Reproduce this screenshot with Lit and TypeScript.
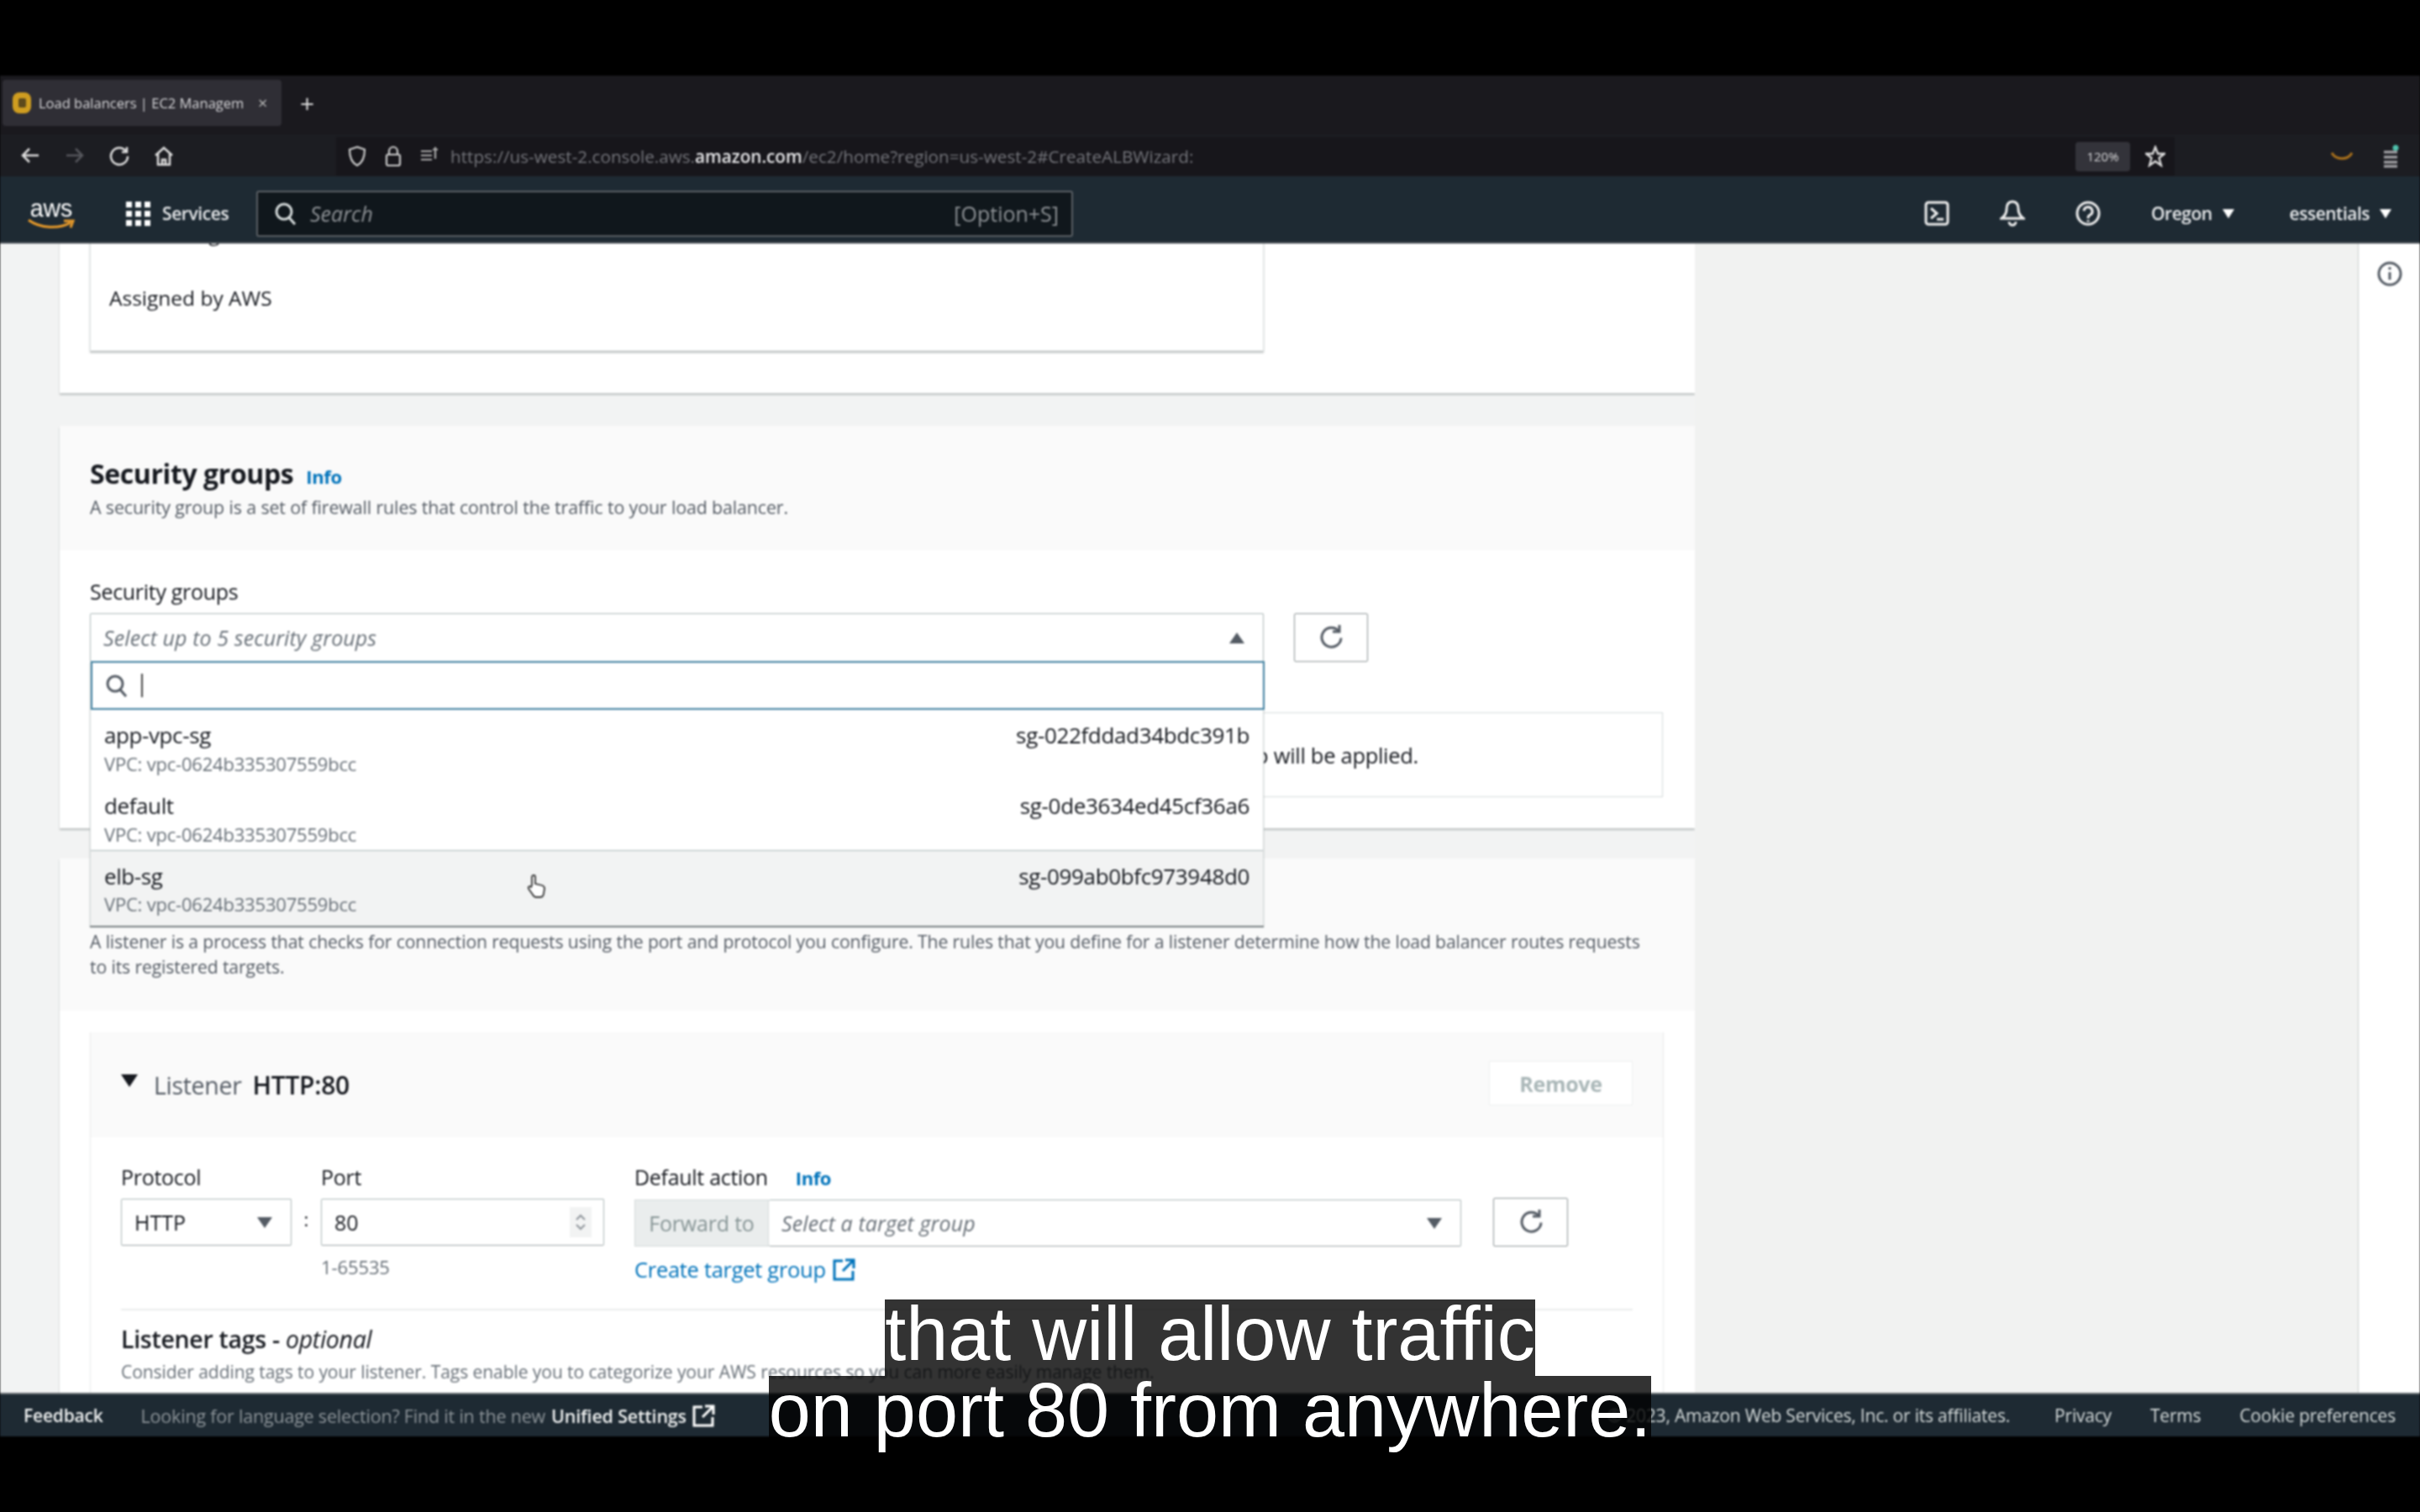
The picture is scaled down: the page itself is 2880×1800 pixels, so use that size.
import { html, css, LitElement } from 'lit'
import { customElement } from 'lit/decorators.js'

const refresh = html`<svg width="30" height="34" viewBox="0 0 30 34" fill="none" stroke="#545b64" stroke-width="3"><path d="M24 9a11.5 11.5 0 1 0 3 8.500"/><path d="M25 2v8h-8" stroke-width="3"/></svg>`
const extLink = (c: string) => html`<svg width="27" height="27" viewBox="0 0 27 27" fill="none" stroke=${c} stroke-width="3"><path d="M12 3H2v22h22V15"/><path d="M15 2h10v10M25 2 12 15"/></svg>`
const searchIcon = (c: string) => html`<svg width="26" height="28" viewBox="0 0 26 28" fill="none" stroke=${c} stroke-width="3"><circle cx="11" cy="12" r="9"/><path d="m17 19 7 8"/></svg>`

const options = [
  { name: 'app-vpc-sg', id: 'sg-022fddad34bdc391b', hover: false },
  { name: 'default', id: 'sg-0de3634ed45cf36a6', hover: false },
  { name: 'elb-sg', id: 'sg-099ab0bfc973948d0', hover: true }
]

@customElement('app-root')
export class AppRoot extends LitElement {
  static styles = css`
  :host {
    display: block;
    font-family: "Open Sans", "Liberation Sans", sans-serif;
    color: #16191f;
  }
  svg { display: block; flex: none; }

  .page {
    position: relative;
    width: 2880px;
    height: 1800px;
    background: #000;
    overflow: hidden;
  }
  .screen {
    display: flex;
    flex-direction: column;
    height: 1620px;
    margin-top: 90px;
    filter: blur(1px);
  }

  /* browser chrome */
  .tabstrip {
    height: 70px;
    box-sizing: border-box;
    padding: 5px 3px 10px;
    background: #1a191e;
    display: flex;
    align-items: center;
  }
  .tab {
    width: 332px;
    height: 55px;
    box-sizing: border-box;
    padding: 0 12px;
    background: #2f2e35;
    border-radius: 4px;
    display: flex;
    align-items: center;
    gap: 9px;
    color: #d5d5d8;
    font-size: 16.500px;
  }
  .tab-title { width: 252px; white-space: nowrap; }
  .tab-x { font-size: 20px; color: #bbb; }
  .favicon {
    width: 22px;
    height: 25px;
    border-radius: 8px;
    background: #cf9d20;
    flex: none;
    display: flex;
    align-items: center;
    justify-content: center;
  }
  .favicon i { width: 9px; height: 11px; background: #5d4a1c; border-radius: 2px; }
  .tab-plus { margin-left: 22px; color: #ddd; font-size: 30px; line-height: 30px; }

  .toolbar {
    height: 50px;
    padding-top: 2px;
    box-sizing: border-box;
    background: #1c1d22;
    display: flex;
    align-items: center;
    position: relative;
  }
  .nav-btns { width: 400px; display: flex; padding-left: 24px; box-sizing: border-box; gap: 29px; }
  .urlbar {
    width: 2188px;
    height: 46px;
    background: #17161b;
    box-sizing: border-box;
    padding: 0 11px 0 14px;
    display: flex;
    align-items: center;
  }
  .url-icons { display: flex; gap: 22px; width: 122px; flex: none; }
  .url { font-size: 20.700px; color: #74757b; white-space: nowrap; flex: 1; }
  .url b { color: #e6e6e8; font-weight: 600; }
  .zoom {
    width: 65px;
    height: 35px;
    background: #33333a;
    border-radius: 4px;
    display: flex;
    align-items: center;
    justify-content: center;
    font-size: 15px;
    color: #d6d6d8;
    margin-right: 18px;
  }
  .ext { flex: 1; display: flex; justify-content: flex-end; align-items: center; gap: 36px; padding-right: 24px; }

  /* aws console nav */
  .nav {
    height: 80px;
    box-sizing: border-box;
    padding-top: 10px;
    background: #1e2a33;
    border-bottom: 2px solid #4c5258;
    display: flex;
    align-items: center;
    color: #e8eaec;
    font-size: 21px;
  }
  .logo { width: 58px; margin-left: 32px; position: relative; height: 40px; }
  .logo-text { font: 30px/28px "Liberation Sans", sans-serif; color: #fff; display: block; text-align: center; transform: scaleX(0.95); }
  .logo svg { margin-top: -2px; }
  .grid { margin-left: 60px; display: grid; grid-template-columns: repeat(3, 7px); gap: 4px; }
  .grid i { width: 7px; height: 7px; background: #fff; }
  .services { margin-left: 14px; font-weight: 600; width: 112px; letter-spacing: -0.4px; }
  .search {
    width: 972px;
    height: 55px;
    box-sizing: border-box;
    padding: 0 15px 0 20px;
    background: #10171c;
    border: 2px solid #5a5f64;
    border-radius: 3px;
    display: flex;
    align-items: center;
    gap: 16px;
    color: #8e9296;
    font-size: 25px;
  }
  .search-text { flex: 1; font-style: italic; }
  .nav-right { flex: 1; display: flex; align-items: center; justify-content: flex-end; }
  .nav-ico { margin-right: 60px; }
  .region { display: flex; align-items: center; gap: 12px; font-weight: 600; letter-spacing: -0.5px; }
  .caret { width: 0; height: 0; border-left: 7px solid transparent; border-right: 7px solid transparent; border-top: 11px solid #fff; }

  /* main area */
  .main {
    flex: 1;
    min-height: 0;
    display: flex;
    overflow: hidden;
    background: #f2f3f3;
  }
  .content { width: 1946px; margin-left: 71px; flex: none; }
  .rail { flex: 1; background: #f1f2f1; }
  .sidebar {
    width: 73px;
    background: #fff;
    border-left: 1px solid #c8cccc;
    box-sizing: content-box;
    padding-top: 21px;
    display: flex;
    justify-content: center;
  }
  .card { background: #fff; box-shadow: 0 2px 2px #b9bdbd; }
  .card-top { margin-top: -60px; height: 238px; padding: 0 36px; box-sizing: border-box; }
  .inner-top {
    width: 1397px;
    height: 188px;
    box-sizing: border-box;
    border: 1px solid #e0e3e3;
    border-top: 0;
    box-shadow: 0 2px 2px #b9bdbd;
    padding: 32px 22px 0;
    font-size: 24.500px;
  }
  .inner-top p { margin: 0; line-height: 32px; }
  .inner-top .assigned { margin-top: 45px; }

  .sec { margin-top: 39px; height: 479px; }
  .sec-head {
    height: 148px;
    box-sizing: border-box;
    padding: 38px 36px 0;
    background: #fafafa;
  }
  .title { display: flex; align-items: baseline; gap: 15px; font-size: 32px; font-weight: 700; line-height: 38px; letter-spacing: -0.4px; }
  .info { font-size: 22px; font-weight: 700; color: #0073bb; letter-spacing: -0.4px; }
  .desc { margin: 3px 0 0; font-size: 21.400px; line-height: 30px; color: #545b64; letter-spacing: -0.13px; }
  .sec-body { padding: 34px 36px 0; }
  .label { font-size: 25px; line-height: 30px; color: #16191f; letter-spacing: -0.3px; font-weight: 500; }
  .sg-row { display: flex; gap: 36px; margin-top: 11px; }
  .select { position: relative; width: 1397px; height: 58px; flex: none; }
  .box {
    height: 100%;
    box-sizing: border-box;
    border: 1.500px solid #aab7b8;
    border-bottom-color: #9aa3a4;
    border-radius: 2px;
    background: #fff;
    display: flex;
    align-items: center;
    padding: 0 22px 0 15px;
    font-size: 25px;
  }
  .placeholder { flex: 1; font-style: italic; color: #687078; letter-spacing: 0.1px; }
  .up { width: 0; height: 0; border-left: 9px solid transparent; border-right: 9px solid transparent; border-bottom: 13px solid #545b64; }
  .down { width: 0; height: 0; border-left: 9px solid transparent; border-right: 9px solid transparent; border-top: 13px solid #545b64; }
  .icon-btn {
    width: 88px;
    height: 58px;
    box-sizing: border-box;
    border: 1.500px solid #8d9596;
    border-radius: 2px;
    background: #fff;
    display: flex;
    align-items: center;
    justify-content: center;
    flex: none;
  }
  .alert {
    width: 1872px;
    height: 101px;
    box-sizing: border-box;
    margin-top: 60px;
    border: 1.500px solid #d5dbdb;
    background: #fff;
    display: flex;
    align-items: center;
    padding-left: 1332px;
    font-size: 25.500px;
    letter-spacing: -0.3px;
  }

  /* dropdown over the next card */
  .popup {
    position: absolute;
    top: 57px;
    left: 0;
    width: 1395px;
    z-index: 2;
    background: #fff;
    border-left: 1px solid #d5dbdb;
    border-right: 1px solid #d5dbdb;
    box-shadow: 0 2px 1px #7f8688;
  }
  .popup-search {
    height: 58px;
    box-sizing: border-box;
    margin-right: -2px;
    border: 2px solid #3f7f9f;
    background: #fff;
    display: flex;
    align-items: center;
    padding-left: 16px;
    gap: 16px;
  }
  .caret-line { width: 2px; height: 28px; background: #444; }
  .opt {
    height: 83.500px;
    box-sizing: border-box;
    padding: 15px 16px 0;
    display: grid;
    grid-template-columns: 1fr auto;
    align-content: start;
    row-gap: 7px;
    position: relative;
  }
  .opt.hover { height: 90px; background: #f2f3f3; border-top: 1.500px solid #aab7b8; padding-top: 15px; row-gap: 6px; }
  .opt-name { font-size: 26px; line-height: 30px; letter-spacing: -0.4px; font-weight: 500; }
  .opt-id { font-size: 26px; line-height: 30px; letter-spacing: -0.35px; font-weight: 500; }
  .opt-vpc { grid-column: 1 / 3; font-size: 22px; line-height: 24px; color: #687078; letter-spacing: -0.2px; }
  .cursor { position: absolute; left: 518px; top: 27px; }

  .lis { margin-top: 36px; height: 700px; }
  .lis-head {
    height: 181px;
    box-sizing: border-box;
    padding: 20px 36px 0;
    background: #fafafa;
  }
  .lis-head .desc { margin-top: 23px; font-size: 21.200px; line-height: 30px; white-space: nowrap; }
  .item { margin: 26px 0 0 36px; width: 1873px; height: 500px; box-sizing: border-box; border-left: 1px solid #e8eaea; border-right: 1px solid #e8eaea; }
  .item-head {
    height: 125px;
    box-sizing: border-box;
    padding: 0 36px;
    background: #fafafa;
    display: flex;
    align-items: center;
    font-size: 28.500px;
    letter-spacing: -0.3px;
  }
  .tri { width: 0; height: 0; border-left: 10px solid transparent; border-right: 10px solid transparent; border-top: 15px solid #16191f; margin: -10px 19px 0 0; }
  .item-head span { color: #545b64; }
  .item-head b { margin-left: 13px; font-weight: 600; font-size: 30px; }
  .remove {
    margin-left: auto;
    width: 171px;
    height: 53px;
    box-sizing: border-box;
    border: 1.500px solid #eef0f0;
    background: #fff;
    color: #aab7b8;
    display: flex;
    align-items: center;
    justify-content: center;
    font-size: 25px;
    font-weight: 700;
    margin-top: -4px;
  }
  .item-body { padding: 33px 36px 0; }
  .fields { display: flex; }
  .field { display: flex; flex-direction: column; }
  .field .label { line-height: 28px; margin-bottom: 12px; display: flex; gap: 33px; align-items: baseline; }
  .control { height: 56px; }
  .colon { width: 35px; text-align: center; padding-top: 49px; font-size: 22px; line-height: 30px; }
  .proto { width: 203px; }
  .proto .box { font-weight: 500; }
  .proto .value { flex: 1; }
  .port { width: 337px; margin-right: 36px; }
  .spin { width: 26px; height: 36px; background: #f2f3f3; display: flex; flex-direction: column; align-items: center; justify-content: center; gap: 4px; margin-right: -8px; }
  .spin svg { opacity: .7; }
  .hint { margin-top: 11px; font-size: 22px; line-height: 28px; color: #687078; letter-spacing: -0.1px; }
  .action { display: flex; width: 984px; }
  .forward {
    width: 160px;
    flex: none;
    box-sizing: border-box;
    border: 1.500px solid #d5dbdb;
    background: #eaeded;
    color: #879596;
    display: flex;
    align-items: center;
    justify-content: center;
    font-size: 25px;
    letter-spacing: -0.2px;
  }
  .action .box { flex: 1; border-left: 0; }
  .refresh2 { margin: 39px 0 0 38px; width: 89px; }
  .create {
    display: flex;
    align-items: center;
    gap: 8px;
    margin-top: 12px;
    color: #0073bb;
    font-size: 25.500px;
    line-height: 30px;
    font-weight: 500;
    letter-spacing: -0.3px;
  }
  .divider { height: 2px; background: #eaeded; width: 1799px; margin-top: 32px; }
  .tags { margin-top: 18px; font-size: 28.500px; font-weight: 600; line-height: 32px; letter-spacing: -0.3px; }
  .tags i { font-weight: 500; }
  .tags-desc { margin: 8px 0 0; font-size: 21.100px; line-height: 30px; color: #687078; letter-spacing: -0.1px; white-space: nowrap; }

  /* console footer */
  .footer {
    height: 52px;
    box-sizing: border-box;
    background: #1e2a33;
    border-top: 2px solid #6a7074;
    padding: 0 29px 0 28px;
    display: flex;
    align-items: center;
    font-size: 21px;
    color: #d5dbdb;
    letter-spacing: -0.2px;
    white-space: nowrap;
  }
  .footer b { font-weight: 600; color: #eef0f0; }
  .lang { margin-left: 45px; color: #8d9499; display: flex; align-items: center; gap: 7px; font-size: 21.500px; }
  .legal { margin-left: auto; display: flex; gap: 46px; }
  .copyright { margin-right: 7px; }

  /* burned in subtitles */
  .captions {
    position: absolute;
    left: 0;
    right: 0;
    top: 1547px;
    text-align: center;
    font: 90px/83px "Liberation Sans", Arial, sans-serif;
    color: #fff;
  }
  .captions span { display: table; margin: 0 auto; padding-bottom: 8px; background: rgba(0, 0, 0, 0.8); white-space: nowrap; }
  `

  render () {
    return html`
    <div class="page">
      <div class="screen">
        <div class="tabstrip">
          <div class="tab">
            <div class="favicon"><i></i></div>
            <div class="tab-title">Load balancers | EC2 Managem</div>
            <div class="tab-x">×</div>
          </div>
          <div class="tab-plus">+</div>
        </div>

        <div class="toolbar">
          <div class="nav-btns">
            <svg width="24" height="24" viewBox="0 0 24 24" fill="none" stroke="#ddd" stroke-width="2.500"><path d="M22 12H3M11 4l-8 8 8 8"/></svg>
            <svg width="24" height="24" viewBox="0 0 24 24" fill="none" stroke="#55565c" stroke-width="2.500"><path d="M2 12h19M13 4l8 8-8 8"/></svg>
            <svg width="24" height="26" viewBox="0 0 24 26" fill="none" stroke="#ddd" stroke-width="2.500"><path d="M20 7a10 10 0 1 0 2 6"/><path d="M21 2v6h-6"/></svg>
            <svg width="24" height="26" viewBox="0 0 24 26" fill="none" stroke="#ddd" stroke-width="2.500"><path d="M2 12 12 3l10 9M5 10v13h14V10M10 23v-6h4v6"/></svg>
          </div>
          <div class="urlbar">
            <div class="url-icons">
              <svg width="22" height="26" viewBox="0 0 22 26" fill="none" stroke="#ccc" stroke-width="2.200"><path d="M11 2 2 5c0 10 3 16 9 19 6-3 9-9 9-19z"/></svg>
              <svg width="20" height="26" viewBox="0 0 20 26" fill="none" stroke="#ccc" stroke-width="2.200"><rect x="2" y="11" width="16" height="13" rx="2"/><path d="M5 11V7a5 5 0 0 1 10 0v4"/></svg>
              <svg width="22" height="24" viewBox="0 0 22 24" fill="none" stroke="#aaa" stroke-width="2.200"><path d="M1 7h13M1 12h13M1 17h13M18 2v14M15 5h6"/></svg>
            </div>
            <div class="url">https://us-west-2.console.aws.<b>amazon.com</b>/ec2/home?region=us-west-2#CreateALBWizard:</div>
            <div class="zoom">120%</div>
            <svg width="24" height="26" viewBox="0 0 24 26" fill="none" stroke="#ddd" stroke-width="2.300"><path d="m12 2 3 8h8l-6.500 5 2.500 9-7-5-7 5 2.500-9L1 10h8z"/></svg>
          </div>
          <div class="ext">
            <svg width="26" height="14" viewBox="0 0 26 14" fill="none" stroke="#a8701c" stroke-width="3"><path d="M1 3c5 9 19 9 24 0"/></svg>
            <svg width="20" height="28" viewBox="0 0 20 28" fill="none"><circle cx="15" cy="4" r="3.500" fill="#4fc2ad"/><path d="M1 9h16M1 15h16M1 21h16M1 26h16" stroke="#a9a9ad" stroke-width="3"/></svg>
          </div>
        </div>

        <div class="nav">
          <div class="logo">
            <span class="logo-text">aws</span>
            <svg width="58" height="14" viewBox="0 0 58 14" fill="none" stroke="#e79a2a" stroke-width="3"><path d="M2 2c14 10 36 11 50 3"/><path d="M44 3h11l-3 8"/></svg>
          </div>
          <div class="grid">${Array.from({ length: 9 }, () => html`<i></i>`)}</div>
          <div class="services">Services</div>
          <div class="search">
            ${searchIcon('#d5dbdb')}
            <div class="search-text">Search</div>
            <div>[Option+S]</div>
          </div>
          <div class="nav-right">
            <svg class="nav-ico" width="30" height="30" viewBox="0 0 30 30" fill="none" stroke="#eee" stroke-width="3"><rect x="2" y="2" width="26" height="26" rx="3"/><path d="m8 9 7 6-7 6M15 22h8"/></svg>
            <svg class="nav-ico" width="30" height="32" viewBox="0 0 30 32" fill="none" stroke="#eee" stroke-width="3"><path d="M15 2c-5 0-7 4-7 9 0 5-2 8-6 11h26c-4-3-6-6-6-11 0-5-2-9-7-9zM11 26a4 4 0 0 0 8 0"/></svg>
            <svg class="nav-ico" width="30" height="30" viewBox="0 0 30 30" fill="none" stroke="#eee" stroke-width="3" style="margin-right:60px"><circle cx="15" cy="15" r="13"/><path d="M10 12a5 5 0 1 1 7 5c-2 1-2 2-2 4M15 23v2"/></svg>
            <div class="region" style="margin-right:66px">Oregon <i class="caret"></i></div>
            <div class="region" style="margin-right:34px">essentials <i class="caret"></i></div>
          </div>
        </div>

        <div class="main">
          <div class="content">
            <div class="card card-top">
              <div class="inner-top">
                <p>IPv4 settings</p>
                <p class="assigned">Assigned by AWS</p>
              </div>
            </div>

            <div class="card sec">
              <div class="sec-head">
                <div class="title">Security groups <span class="info">Info</span></div>
                <p class="desc">A security group is a set of firewall rules that control the traffic to your load balancer.</p>
              </div>
              <div class="sec-body">
                <div class="label">Security groups</div>
                <div class="sg-row">
                  <div class="select">
                    <div class="box">
                      <span class="placeholder">Select up to 5 security groups</span>
                      <i class="up"></i>
                    </div>
                    <div class="popup">
                      <div class="popup-search">
                        ${searchIcon('#545b64')}
                        <i class="caret-line"></i>
                      </div>
                      ${options.map(o => html`
                        <div class="opt ${o.hover ? 'hover' : ''}">
                          <div class="opt-name">${o.name}</div>
                          <div class="opt-id">${o.id}</div>
                          <div class="opt-vpc">VPC: vpc-0624b335307559bcc</div>
                          ${o.hover ? html`<svg class="cursor" width="24" height="30" viewBox="0 0 24 30" fill="#fff" stroke="#333" stroke-width="1.800"><path d="M7 14V4a2 2 0 0 1 4 0v8l8 2c2 .500 3 2 3 4l-1 6c-.500 3-2 4-4 4h-5c-2 0-3-1-4-3l-5-7c-1-2 1-4 3-2z"/></svg>` : ''}
                        </div>
                      `)}
                    </div>
                  </div>
                  <div class="icon-btn">${refresh}</div>
                </div>
                <div class="alert">group will be applied.</div>
              </div>
            </div>

            <div class="card lis">
              <div class="lis-head">
                <div class="title">Listeners and routing <span class="info">Info</span></div>
                <p class="desc">A listener is a process that checks for connection requests using the port and protocol you configure. The rules that you define for a listener determine how the load balancer routes requests<br>to its registered targets.</p>
              </div>
              <div class="item">
                <div class="item-head">
                  <i class="tri"></i>
                  <span>Listener</span><b>HTTP:80</b>
                  <div class="remove">Remove</div>
                </div>
                <div class="item-body">
                  <div class="fields">
                    <div class="field proto">
                      <div class="label">Protocol</div>
                      <div class="control"><div class="box"><span class="value">HTTP</span><i class="down"></i></div></div>
                    </div>
                    <div class="colon">:</div>
                    <div class="field port">
                      <div class="label">Port</div>
                      <div class="control">
                        <div class="box">
                          <span class="value" style="flex:1">80</span>
                          <div class="spin">
                            <svg width="12" height="8" viewBox="0 0 12 8" fill="none" stroke="#687078" stroke-width="2"><path d="m1 7 5-5 5 5"/></svg>
                            <svg width="12" height="8" viewBox="0 0 12 8" fill="none" stroke="#687078" stroke-width="2"><path d="m1 1 5 5 5-5"/></svg>
                          </div>
                        </div>
                      </div>
                      <div class="hint">1-65535</div>
                    </div>
                    <div class="field">
                      <div class="label">Default action <span class="info">Info</span></div>
                      <div class="control action">
                        <div class="forward">Forward to</div>
                        <div class="box">
                          <span class="placeholder">Select a target group</span>
                          <i class="down"></i>
                        </div>
                      </div>
                      <div class="create">Create target group ${extLink('#0073bb')}</div>
                    </div>
                    <div class="icon-btn refresh2">${refresh}</div>
                  </div>
                  <div class="divider"></div>
                  <div class="tags">Listener tags - <i>optional</i></div>
                  <p class="tags-desc">Consider adding tags to your listener. Tags enable you to categorize your AWS resources so you can more easily manage them.</p>
                </div>
              </div>
            </div>
          </div>
          <div class="rail"></div>
          <div class="sidebar">
            <svg width="30" height="30" viewBox="0 0 30 30" fill="none" stroke="#545b64" stroke-width="3"><circle cx="15" cy="15" r="13"/><path d="M15 13v9M15 7v3"/></svg>
          </div>
        </div>

        <div class="footer">
          <b>Feedback</b>
          <div class="lang">Looking for language selection? Find it in the new <b>Unified Settings</b> ${extLink('#fff')}</div>
          <div class="legal">
            <span class="copyright">© 2023, Amazon Web Services, Inc. or its affiliates.</span>
            <span>Privacy</span>
            <span>Terms</span>
            <span>Cookie preferences</span>
          </div>
        </div>
      </div>

      <div class="captions">
        <span>that will allow traffic</span>
        <span>on port 80 from anywhere.</span>
      </div>
    </div>
    `
  }
}
